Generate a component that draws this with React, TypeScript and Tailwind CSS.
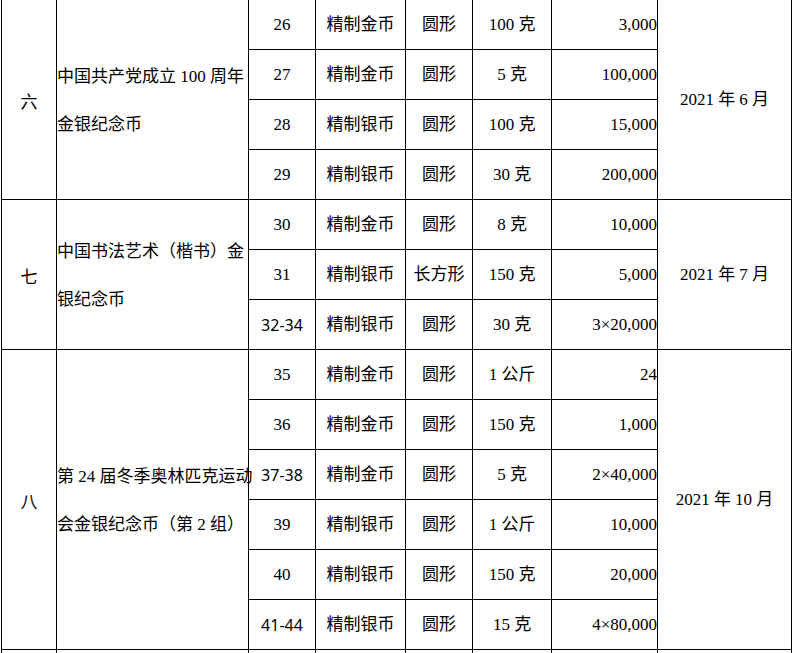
type Row = [string, string, string, string, string]

type Group = {
	no: string
	name: string[]
	date: string
	rows: Row[]
}

const groups: Group[] = [
	{
		no: '六',
		name: ['中国共产党成立 100 周年', '金银纪念币'],
		date: '2021 年 6 月',
		rows: [
			['26', '精制金币', '圆形', '100 克', '3,000'],
			['27', '精制金币', '圆形', '5 克', '100,000'],
			['28', '精制银币', '圆形', '100 克', '15,000'],
			['29', '精制银币', '圆形', '30 克', '200,000'],
		],
	},
	{
		no: '七',
		name: ['中国书法艺术（楷书）金', '银纪念币'],
		date: '2021 年 7 月',
		rows: [
			['30', '精制金币', '圆形', '8 克', '10,000'],
			['31', '精制银币', '长方形', '150 克', '5,000'],
			['32-34', '精制银币', '圆形', '30 克', '3×20,000'],
		],
	},
	{
		no: '八',
		name: ['第 24 届冬季奥林匹克运动', '会金银纪念币（第 2 组）'],
		date: '2021 年 10 月',
		rows: [
			['35', '精制金币', '圆形', '1 公斤', '24'],
			['36', '精制金币', '圆形', '150 克', '1,000'],
			['37-38', '精制金币', '圆形', '5 克', '2×40,000'],
			['39', '精制银币', '圆形', '1 公斤', '10,000'],
			['40', '精制银币', '圆形', '150 克', '20,000'],
			['41-44', '精制银币', '圆形', '15 克', '4×80,000'],
		],
	},
]

const cell = 'border border-black p-0 align-middle'

const App = () => {
	return (
		<div className="h-[653px] overflow-hidden bg-white text-[17px] text-black [font-family:'Liberation_Serif','Noto_Sans_CJK_SC',serif]">
			<table className="-mt-[1px] ml-[1px] w-[790px] table-fixed border-collapse">
				<colgroup>
					<col className="w-[55px]" />
					<col className="w-[192px]" />
					<col className="w-[67px]" />
					<col className="w-[90px]" />
					<col className="w-[67px]" />
					<col className="w-[79px]" />
					<col className="w-[106px]" />
					<col className="w-[134px]" />
				</colgroup>
				<tbody>
					{groups.map((g) =>
						g.rows.map((r, i) => (
							<tr key={r[0]} className="h-[50px]">
								{i === 0 && (
									<>
										<td rowSpan={g.rows.length} className={`${cell} pt-[6px] text-center`}>
											{g.no}
										</td>
										<td rowSpan={g.rows.length} className={`${cell} pt-[2px] text-left leading-[48px]`}>
											{g.name.map((line) => (
												<span key={line} className="block whitespace-nowrap">
													{line}
												</span>
											))}
										</td>
									</>
								)}
								<td
									className={`${cell} text-center ${
										r[0].includes('-') ? "[font-family:'Noto_Sans','Liberation_Sans',sans-serif] text-[16px]" : ''
									}`}
								>
									{r[0]}
								</td>
								<td className={`${cell} text-center`}>{r[1]}</td>
								<td className={`${cell} text-center`}>{r[2]}</td>
								<td className={`${cell} text-center`}>{r[3]}</td>
								<td className={`${cell} text-right`}>{r[4]}</td>
								{i === 0 && (
									<td rowSpan={g.rows.length} className={`${cell} text-center`}>
										{g.date}
									</td>
								)}
							</tr>
						)),
					)}
					<tr className="h-[50px]">
						<td className={cell}></td>
						<td className={cell}></td>
						<td className={cell}></td>
						<td className={cell}></td>
						<td className={cell}></td>
						<td className={cell}></td>
						<td className={cell}></td>
						<td className={cell}></td>
					</tr>
				</tbody>
			</table>
		</div>
	)
}

export default App
